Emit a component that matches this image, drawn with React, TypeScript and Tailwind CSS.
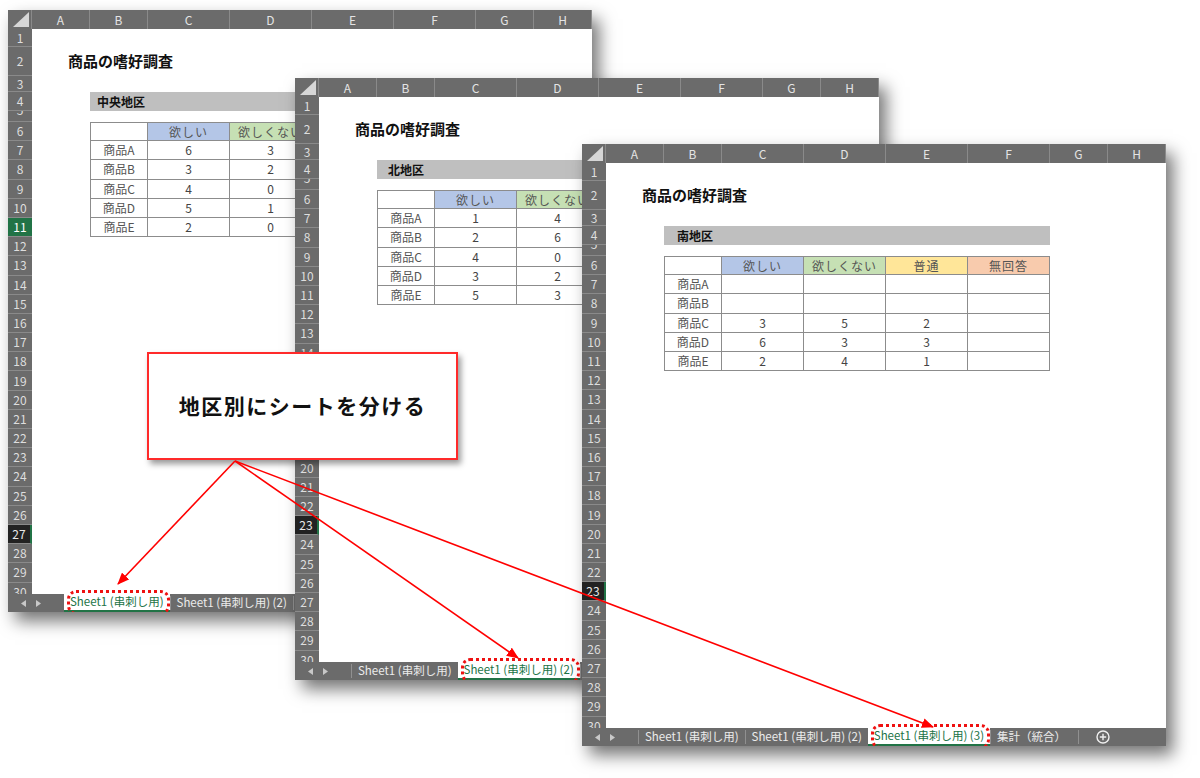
import React from 'react';

interface Tab {
  label: string;
  active?: boolean;
}

interface SheetProps {
  pos: string;
  region: string;
  regionIndent: string;
  values: string[][];
  tabs: Tab[];
  addButton?: boolean;
  greenRow?: number;
  darkRow?: number;
}

const COLS = [
  { l: 'A', w: 'w-[58px]' },
  { l: 'B', w: 'w-[58px]' },
  { l: 'C', w: 'w-[82px]' },
  { l: 'D', w: 'w-[82px]' },
  { l: 'E', w: 'w-[82px]' },
  { l: 'F', w: 'w-[82px]' },
  { l: 'G', w: 'w-[58px]' },
  { l: 'H', w: 'w-[58px]' },
];

// row heights for rows 1..30
const ROW_H = [
  'h-[18px]',
  'h-[29px]',
  'h-[16px]',
  'h-[19px]',
  'h-[11px]',
  ...Array(25).fill('h-[19.2px]'),
];

const HEADS = [
  { t: '欲しい', bg: 'bg-[#b4c6e7]' },
  { t: '欲しくない', bg: 'bg-[#c6e0b4]' },
  { t: '普通', bg: 'bg-[#ffe699]' },
  { t: '無回答', bg: 'bg-[#f8cbad]' },
];

const ITEMS = ['商品A', '商品B', '商品C', '商品D', '商品E'];

function Corner() {
  return (
    <div className="w-[24px] shrink-0 flex items-end justify-end pr-[2px] pb-[2px] border-r border-[#8a8a8a]">
      <svg width="16" height="15" viewBox="0 0 16 15">
        <path d="M16 0 L16 15 L0 15 Z" fill="#d6d6d6" />
      </svg>
    </div>
  );
}

function RowLabel({ n, green, dark }: { n: number; green?: boolean; dark?: boolean }) {
  const base = 'w-[24px] shrink-0 h-full border-b border-[#8a8a8a] flex justify-center text-[12px]';
  if (n === 5) {
    return (
      <div className={`${base} bg-[#6b6b6b] text-[#dedede] overflow-hidden items-start`}>
        <span className="leading-[12px] -mt-[7px]">5</span>
      </div>
    );
  }
  let tone = 'bg-[#6b6b6b] text-[#dedede]';
  if (green) tone = 'bg-[#217346] text-white';
  if (dark) tone = 'bg-[#222222] text-[#e8e8e8] border-r-2 border-r-[#217346]';
  return <div className={`${base} ${tone} items-center leading-none`}>{n}</div>;
}

function TabBar({ tabs, addButton }: { tabs: Tab[]; addButton?: boolean }) {
  return (
    <div className="h-[18px] shrink-0 bg-[#6b6b6b] flex items-stretch text-[11.5px] text-[#ececec] whitespace-nowrap">
      <div className="w-[56px] shrink-0 flex items-center pl-[13px] gap-[10px]">
        <svg width="5" height="7" viewBox="0 0 5 7">
          <path d="M5 0 L5 7 L0 3.5 Z" fill="#c8c8c8" />
        </svg>
        <svg width="5" height="7" viewBox="0 0 5 7">
          <path d="M0 0 L0 7 L5 3.5 Z" fill="#c8c8c8" />
        </svg>
      </div>
      {tabs.map((tab, i) =>
        tab.active ? (
          <div key={i} className="relative bg-white text-[#217346] px-[6px] flex items-center border-b-2 border-[#217346]">
            <span className="leading-none">{tab.label}</span>
            <div className="absolute left-[3px] right-0 -top-[4px] -bottom-[5px] border-[3px] border-dotted border-[#ee1111] rounded-[9px]" />
          </div>
        ) : (
          <div key={i} className="flex items-center">
            <div className="w-px h-[14px] bg-[#909090]" />
            <span className="px-[6px] leading-none">{tab.label}</span>
          </div>
        )
      )}
      {addButton && (
        <div className="flex items-center">
          <div className="w-px h-[14px] bg-[#909090] ml-[6px]" />
          <svg className="ml-[17px]" width="14" height="14" viewBox="0 0 14 14">
            <circle cx="7" cy="7" r="6" fill="none" stroke="#f0f0f0" strokeWidth="1.4" />
            <path d="M7 3.8 V10.2 M3.8 7 H10.2" stroke="#f0f0f0" strokeWidth="1.4" />
          </svg>
        </div>
      )}
    </div>
  );
}

function RowContent({ idx, region, regionIndent, values }: { idx: number; region: string; regionIndent: string; values: string[][] }) {
  const border = 'border-[#8c8c8c]';
  if (idx === 1) {
    return (
      <div className="flex-1 flex items-center pl-[36px] font-bold text-[15px] text-[#111] whitespace-nowrap">
        商品の嗜好調査
      </div>
    );
  }
  if (idx === 3) {
    return (
      <div className="flex-1 flex">
        <div className="w-[58px] shrink-0" />
        <div className={`w-[386px] shrink-0 bg-[#bfbfbf] flex items-center ${regionIndent} font-bold text-[12px] text-[#111]`}>
          {region}
        </div>
      </div>
    );
  }
  if (idx === 5) {
    return (
      <div className="flex-1 flex">
        <div className="w-[58px] shrink-0" />
        <div className={`w-[58px] shrink-0 bg-white border-l border-t border-r border-b ${border}`} />
        {HEADS.map((h) => (
          <div key={h.t} className={`w-[82px] shrink-0 ${h.bg} border-t border-r border-b ${border} flex items-center justify-center text-[12px] text-[#555] tracking-[1px]`}>
            {h.t}
          </div>
        ))}
      </div>
    );
  }
  if (idx >= 6 && idx <= 10) {
    const r = idx - 6;
    return (
      <div className="flex-1 flex">
        <div className="w-[58px] shrink-0" />
        <div className={`w-[58px] shrink-0 bg-white border-l border-r border-b ${border} flex items-center justify-center text-[12px] text-[#555]`}>
          {ITEMS[r]}
        </div>
        {values[r].map((v, j) => (
          <div key={j} className={`w-[82px] shrink-0 bg-white border-r border-b ${border} flex items-center justify-center text-[12px] text-[#444]`}>
            {v}
          </div>
        ))}
      </div>
    );
  }
  return <div className="flex-1" />;
}

function Sheet({ pos, region, regionIndent, values, tabs, addButton, greenRow, darkRow }: SheetProps) {
  return (
    <div className={`absolute ${pos} w-[584px] h-[602px] bg-white flex flex-col overflow-hidden shadow-[7px_9px_16px_rgba(0,0,0,0.55)]`}>
      {/* column header */}
      <div className="h-[19px] shrink-0 bg-[#6b6b6b] flex text-[12px] text-[#e4e4e4]">
        <Corner />
        {COLS.map((c) => (
          <div key={c.l} className={`${c.w} shrink-0 border-r border-[#8a8a8a] flex items-center justify-center leading-none`}>
            {c.l}
          </div>
        ))}
      </div>
      {/* grid body */}
      <div className="flex-1 overflow-hidden flex flex-col">
        {ROW_H.map((h, i) => (
          <div key={i} className={`${h} shrink-0 flex`}>
            <RowLabel n={i + 1} green={greenRow === i + 1} dark={darkRow === i + 1} />
            <RowContent idx={i} region={region} regionIndent={regionIndent} values={values} />
          </div>
        ))}
      </div>
      <TabBar tabs={tabs} addButton={addButton} />
    </div>
  );
}

export default function App() {
  return (
    <div className="relative w-[1200px] h-[778px] bg-white overflow-hidden font-['Noto_Sans_CJK_JP','Noto_Sans',sans-serif]">
      <Sheet
        pos="left-[8px] top-[10px] z-10"
        region="中央地区"
        regionIndent="pl-[7px]"
        values={[
          ['6', '3', '', ''],
          ['3', '2', '', ''],
          ['4', '0', '', ''],
          ['5', '1', '', ''],
          ['2', '0', '', ''],
        ]}
        tabs={[{ label: 'Sheet1 (串刺し用)', active: true }, { label: 'Sheet1 (串刺し用) (2)' }, { label: 'Sheet1 (串刺し用) (3)' }]}
        greenRow={11}
        darkRow={27}
      />
      <Sheet
        pos="left-[295px] top-[78px] z-20"
        region="北地区"
        regionIndent="pl-[11px]"
        values={[
          ['1', '4', '', ''],
          ['2', '6', '', ''],
          ['4', '0', '', ''],
          ['3', '2', '', ''],
          ['5', '3', '', ''],
        ]}
        tabs={[{ label: 'Sheet1 (串刺し用)' }, { label: 'Sheet1 (串刺し用) (2)', active: true }, { label: 'Sheet1 (串刺し用) (3)' }]}
        darkRow={23}
      />
      <Sheet
        pos="left-[582px] top-[144px] z-30"
        region="南地区"
        regionIndent="pl-[13px]"
        values={[
          ['', '', '', ''],
          ['', '', '', ''],
          ['3', '5', '2', ''],
          ['6', '3', '3', ''],
          ['2', '4', '1', ''],
        ]}
        tabs={[
          { label: 'Sheet1 (串刺し用)' },
          { label: 'Sheet1 (串刺し用) (2)' },
          { label: 'Sheet1 (串刺し用) (3)', active: true },
          { label: '集計（統合）' },
        ]}
        addButton
        darkRow={23}
      />

      {/* callout */}
      <div className="absolute left-[147px] top-[352px] w-[311px] h-[108px] z-40 bg-white border-2 border-[#ff2a2a] shadow-[3px_4px_6px_rgba(0,0,0,0.4)] flex items-center justify-center">
        <span className="font-bold text-[21px] tracking-[1.5px] text-[#111]">地区別にシートを分ける</span>
      </div>

      {/* arrows */}
      <svg className="absolute inset-0 z-50 pointer-events-none" width="1200" height="778" viewBox="0 0 1200 778">
        <defs>
          <marker id="ah" markerWidth="12" markerHeight="10" refX="11" refY="5" orient="auto" markerUnits="userSpaceOnUse">
            <path d="M0 0 L12 5 L0 10 Z" fill="#ff0000" />
          </marker>
        </defs>
        <line x1="235" y1="461" x2="118" y2="584" stroke="#ff0000" strokeWidth="1.6" markerEnd="url(#ah)" />
        <line x1="235" y1="461" x2="518" y2="658" stroke="#ff0000" strokeWidth="1.6" markerEnd="url(#ah)" />
        <line x1="235" y1="461" x2="933" y2="727" stroke="#ff0000" strokeWidth="1.6" markerEnd="url(#ah)" />
      </svg>
    </div>
  );
}
